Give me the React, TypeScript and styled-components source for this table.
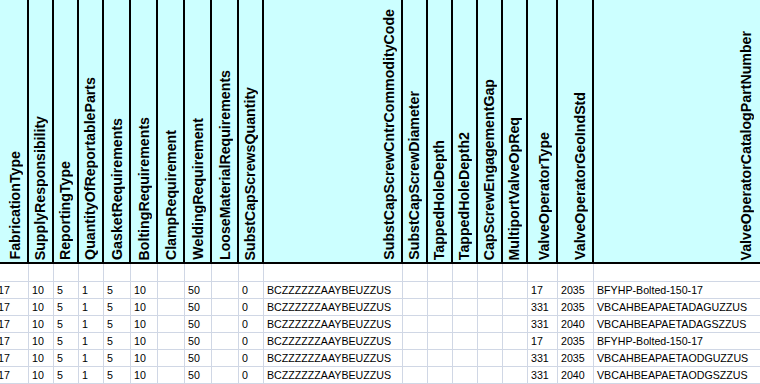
import styled, { createGlobalStyle } from "styled-components";

const GlobalStyle = createGlobalStyle`
  html, body {
    margin: 0;
    padding: 0;
    background: #fff;
    overflow: hidden;
  }
  body {
    width: 760px;
    height: 384px;
  }
`;

type Column = { name: string; width: number; open?: boolean };

const columns: Column[] = [
  { name: "FabricationType", width: 34 },
  { name: "SupplyResponsibility", width: 25 },
  { name: "ReportingType", width: 25 },
  { name: "QuantityOfReportableParts", width: 25 },
  { name: "GasketRequirements", width: 27 },
  { name: "BoltingRequirements", width: 27 },
  { name: "ClampRequirement", width: 27 },
  { name: "WeldingRequirement", width: 27 },
  { name: "LooseMaterialRequirements", width: 27 },
  { name: "SubstCapScrewsQuantity", width: 25 },
  { name: "SubstCapScrewCntrCommodityCode", width: 139 },
  { name: "SubstCapScrewDiameter", width: 25 },
  { name: "TappedHoleDepth", width: 25 },
  { name: "TappedHoleDepth2", width: 25 },
  { name: "CapScrewEngagementGap", width: 25 },
  { name: "MultiportValveOpReq", width: 25 },
  { name: "ValveOperatorType", width: 30 },
  { name: "ValveOperatorGeoIndStd", width: 36 },
  { name: "ValveOperatorCatalogPartNumber", width: 164, open: true },
  { name: "", width: 60, open: true },
];

const common = ["17", "10", "5", "1", "5", "10", "", "50", "", "0", "BCZZZZZZAAYBEUZZUS", "", "", "", "", ""];

const rows: string[][] = [
  [...common, "17", "2035", "BFYHP-Bolted-150-17", ""],
  [...common, "331", "2035", "VBCAHBEAPAETADAGUZZUS", ""],
  [...common, "331", "2040", "VBCAHBEAPAETADAGSZZUS", ""],
  [...common, "17", "2035", "BFYHP-Bolted-150-17", ""],
  [...common, "331", "2035", "VBCAHBEAPAETAODGUZZUS", ""],
  [...common, "331", "2040", "VBCAHBEAPAETAODGSZZUS", ""],
];

// the sheet is scrolled a few pixels to the right, so the first column is cut
const Sheet = styled.div<{ $cols: string }>`
  display: grid;
  grid-template-columns: ${(p) => p.$cols};
  margin-left: -5px;
  font-family: "Liberation Sans", Arial, sans-serif;
  color: #000;
`;

const HeadCell = styled.div<{ $open?: boolean }>`
  height: 260px;
  background: #ccffff;
  border-bottom: 2px solid #000;
  border-right: ${(p) => (p.$open ? "none" : "2px solid #000")};
  display: flex;
  justify-content: flex-end;
  align-items: flex-end;
  padding: 0 4px 2px 0;
  overflow: hidden;
`;

const HeadLabel = styled.span`
  writing-mode: vertical-rl;
  transform: rotate(180deg);
  font-weight: bold;
  font-size: 14.2px;
  line-height: 16px;
  white-space: nowrap;
`;

const Cell = styled.div<{ $blank?: boolean; $open?: boolean }>`
  height: ${(p) => (p.$blank ? 17 : 16)}px;
  border-bottom: 1px solid #d0d7e5;
  border-right: ${(p) => (p.$open ? "none" : "1px solid #d0d7e5")};
  padding-left: 3px;
  font-size: 10.67px;
  line-height: 16px;
  white-space: nowrap;
  overflow: hidden;
`;

function App() {
  const template = columns.map((c) => `${c.width}px`).join(" ");

  return (
    <>
      <GlobalStyle />
      <Sheet $cols={template}>
        {columns.map((c, i) => (
          <HeadCell key={`h${i}`} $open={c.open}>
            <HeadLabel>{c.name}</HeadLabel>
          </HeadCell>
        ))}
        {columns.map((c, i) => (
          <Cell key={`b${i}`} $blank $open={c.open} />
        ))}
        {rows.map((row, r) =>
          row.map((value, i) => (
            <Cell key={`r${r}c${i}`} $open={columns[i].open}>
              {value}
            </Cell>
          ))
        )}
        {columns.map((c, i) => (
          <Cell key={`e${i}`} $open={c.open} />
        ))}
      </Sheet>
    </>
  );
}

export default App;
